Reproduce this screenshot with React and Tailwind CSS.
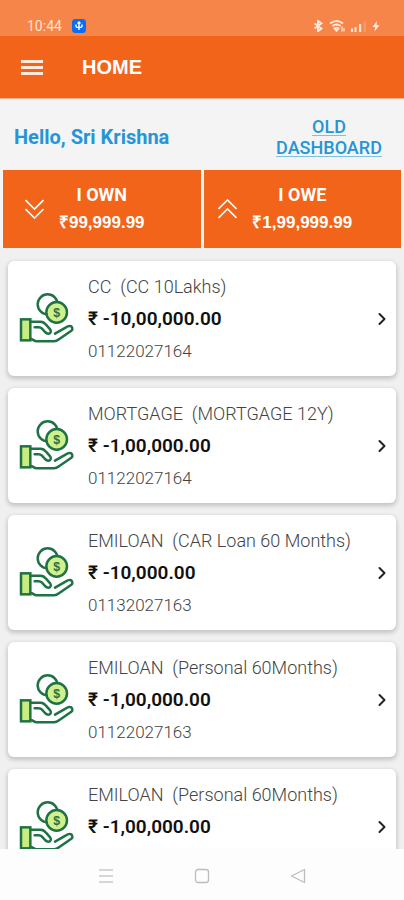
import { ChevronRight } from 'lucide-react'

const accounts = [
  { type: 'CC', name: 'CC 10Lakhs', balance: '-10,00,000.00', number: '01122027164' },
  { type: 'MORTGAGE', name: 'MORTGAGE 12Y', balance: '-1,00,000.00', number: '01122027164' },
  { type: 'EMILOAN', name: 'CAR Loan 60 Months', balance: '-10,000.00', number: '01132027163' },
  { type: 'EMILOAN', name: 'Personal 60Months', balance: '-1,00,000.00', number: '01122027163' },
  { type: 'EMILOAN', name: 'Personal 60Months', balance: '-1,00,000.00' },
]

function LoanIcon() {
  return (
    <svg viewBox="0 0 174 168" className="w-[58px] h-14 shrink-0" fill="none" stroke="#1f7245" strokeWidth="7.5" strokeLinecap="round" strokeLinejoin="round" aria-hidden="true">
      <circle cx="89" cy="40" r="30" />
      <circle cx="116" cy="64" r="31" fill="#d0f08c" />
      <text x="116" y="77" fontSize="37" fontWeight="700" fontFamily="Liberation Sans, sans-serif" textAnchor="middle" fill="#1f7245" stroke="none">$</text>
      <rect x="9" y="85" width="28" height="63" fill="#c8ec80" strokeLinejoin="miter" />
      <path d="M38 92h30c7 0 12 4 16 9l13 15c4 6 0 12-6 12-4 0-7-2-10-5l-9-10c-3-3-6-4-10-4H50" />
      <path d="M38 144c7 0 10 7 18 7h52c6 0 10-2 15-6l37-26c6-5 3-15-6-14-4 0-7 2-10 4l-33 19" />
    </svg>
  )
}

function StatusBar() {
  return (
    <div className="flex h-9 shrink-0 items-end justify-between bg-[#f68549] pt-4 pr-6 pb-0.5 pl-[27px] text-white">
      <div className="flex items-center gap-2.5">
        <span className="text-sm leading-4 text-[#ffe3d3]">10:44</span>
        <svg viewBox="0 0 14 14" className="size-3.5" aria-hidden="true">
          <rect width="14" height="14" rx="3.5" fill="#0c6cf5" />
          <path d="M7 3v8M4 5.5v1.8q0 1.2 3 1.2M10 5.5v1.8q0 1.2-3 1.2M5.5 4.5L7 3l1.5 1.5" fill="none" stroke="#fff" strokeWidth="1.4" />
        </svg>
      </div>
      <div className="flex h-4 items-center gap-1.5 text-[#ffe8db]">
        <svg viewBox="0 0 10 12" className="h-3 w-2.5" fill="none" stroke="currentColor" strokeWidth="1.9" aria-hidden="true">
          <path d="M1.5 3.5l7 5L5 11.3V.7l3.5 2.8-7 5" />
        </svg>
        <svg viewBox="0 0 16 12" className="h-3 w-4" fill="none" stroke="currentColor" strokeWidth="1.9" aria-hidden="true">
          <path d="M1 3.500q6.500-5 13 0M3.300 6q4.200-3 8.400 0M5.500 8.300q2-1.300 4 0L7.500 11z" />
          <path d="M13 6.500v5M15 8v3.500" strokeWidth="1.2" />
        </svg>
        <svg viewBox="0 0 15 12" className="h-3 w-[15px]" aria-hidden="true">
          <path d="M0 8.500h2V12H0zM3.500 7h2v5h-2zM8 4h2.200v8H8z" fill="currentColor" />
          <path d="M12.500 1.500H15V12h-2.500z" fill="currentColor" opacity=".2" />
        </svg>
        <svg viewBox="0 0 8 12" className="h-3 w-2" fill="currentColor" aria-hidden="true">
          <path d="M5 1L.5 7h2.700l-.7 4.500L7.500 5.300H4.600z" />
        </svg>
      </div>
    </div>
  )
}

function DoubleChevron({ up }) {
  return (
    <svg viewBox="0 0 19 20" className="h-5 w-[19px] shrink-0" fill="none" stroke="currentColor" strokeWidth="1.6" aria-hidden="true">
      <path d={up ? 'M.5 10L9.5 1l9 9M.5 19l9-9 9 9' : 'M.5 1l9 9 9-9M.5 10l9 9 9-9'} />
    </svg>
  )
}

function SummaryTile({ label, amount, up }) {
  return (
    <button type="button" className="flex h-[78px] flex-1 items-center justify-center gap-[15px] bg-[#f26419] pr-[34px] font-bold text-white">
      <DoubleChevron up={up} />
      <span className="flex flex-col items-center gap-1">
        <span className="text-lg leading-6">{label}</span>
        <span className="text-[17px] leading-6 font-['Liberation_Sans',sans-serif]">{amount}</span>
      </span>
    </button>
  )
}

function AccountCard({ account }) {
  return (
    <li>
      <a href="#account" className="flex h-[115px] items-center rounded-md bg-white pr-1 pl-2.5 shadow-[0_2px_4px_1px_rgba(0,0,0,0.18)]">
        <LoanIcon />
        <div className="ml-3 flex-1 whitespace-nowrap">
          <div className="whitespace-pre text-lg leading-6 font-light text-[#444]">{`${account.type}  (${account.name})`}</div>
          <div className="mt-2 text-[19px] leading-6 font-semibold text-[#111]">₹ {account.balance}</div>
          <div className="mt-2 h-6 text-[17px] leading-6 font-light text-[#444]">{account.number}</div>
        </div>
        <ChevronRight className="size-5 text-[#222]" strokeWidth={2.4} aria-hidden="true" />
      </a>
    </li>
  )
}

export default function App() {
  return (
    <div className="flex h-screen flex-col overflow-hidden bg-[#f4f4f5] font-[Roboto,sans-serif]">
      <StatusBar />
      <header className="flex h-[63px] shrink-0 items-center border-b border-[#f9b48f] bg-[#f26419] pl-[21px] text-white">
        <button type="button" aria-label="Menu" className="flex w-[22px] flex-col gap-[3px]">
          <span className="h-[3px] bg-[#ffe9dd]" />
          <span className="h-[3px] bg-[#ffe9dd]" />
          <span className="h-[3px] bg-[#ffe9dd]" />
        </button>
        <h1 className="ml-[39px] text-xl leading-6 font-bold font-['Liberation_Sans',sans-serif]">HOME</h1>
      </header>

      <div className="flex h-[71px] shrink-0 items-center justify-between pt-1 pr-[19px] pl-3.5 text-[#2695d6]">
        <h2 className="text-xl leading-6 font-bold">Hello, Sri Krishna</h2>
        <a href="#old" className="w-28 text-center text-lg leading-[21px] font-medium underline decoration-[#7fbfe4] underline-offset-2">
          OLD DASHBOARD
        </a>
      </div>

      <div className="flex shrink-0 gap-[3px] px-[3px]">
        <SummaryTile label="I OWN" amount="₹99,999.99" />
        <SummaryTile label="I OWE" amount="₹1,99,999.99" up />
      </div>

      <main className="min-h-0 flex-1 overflow-y-auto bg-[#f0f0f0] px-2 pt-[13px] [scrollbar-width:none]">
        <ul className="flex flex-col gap-3">
          {accounts.map((account, i) => (
            <AccountCard key={i} account={account} />
          ))}
        </ul>
      </main>

      <nav className="flex h-[51px] shrink-0 items-center justify-center gap-20 bg-[#fdfdfd] pt-0.5">
        <button type="button" aria-label="Recent apps">
          <svg viewBox="0 0 16 16" className="size-4" stroke="#c9c9c9" strokeWidth="1.5"><path d="M1 2h14M1 8h14M1 14h14" /></svg>
        </button>
        <button type="button" aria-label="Home">
          <svg viewBox="0 0 16 16" className="size-4" fill="none" stroke="#bdbdbd" strokeWidth="1.3"><rect x="1.5" y="1.5" width="13" height="13" rx="2.5" /></svg>
        </button>
        <button type="button" aria-label="Back">
          <svg viewBox="0 0 16 16" className="size-4" fill="none" stroke="#bdbdbd" strokeWidth="1.3" strokeLinejoin="round"><path d="M14.5 1.5v13L1.5 8z" /></svg>
        </button>
      </nav>
    </div>
  )
}
